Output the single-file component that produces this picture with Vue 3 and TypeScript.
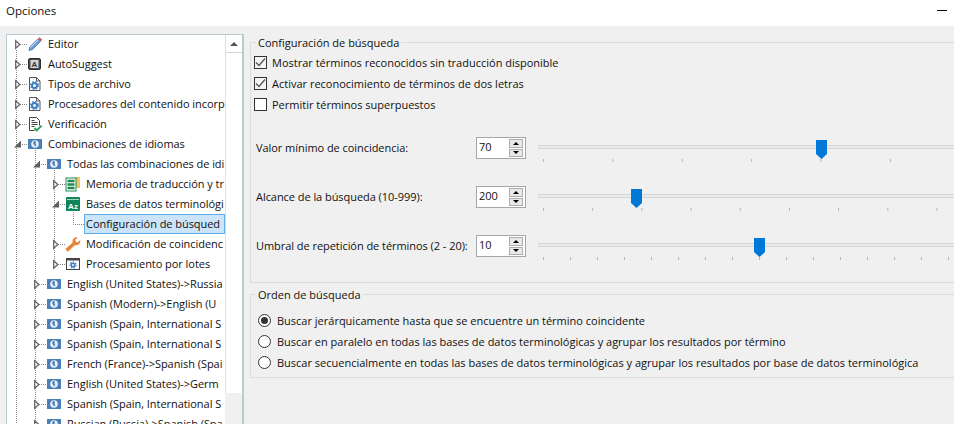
<script setup lang="ts">
type Icon = 'pencil' | 'suggest' | 'gear' | 'check' | 'globe' | 'memory' | 'termbase' | 'none' | 'wrench' | 'batch'

interface TreeRow {
  label: string
  level: number
  state: 'closed' | 'open' | 'leaf'
  icon: Icon
  selected?: boolean
}

const rows: TreeRow[] = [
  { label: 'Editor', level: 0, state: 'closed', icon: 'pencil' },
  { label: 'AutoSuggest', level: 0, state: 'closed', icon: 'suggest' },
  { label: 'Tipos de archivo', level: 0, state: 'closed', icon: 'gear' },
  { label: 'Procesadores del contenido incorp', level: 0, state: 'closed', icon: 'gear' },
  { label: 'Verificación', level: 0, state: 'closed', icon: 'check' },
  { label: 'Combinaciones de idiomas', level: 0, state: 'open', icon: 'globe' },
  { label: 'Todas las combinaciones de idi', level: 1, state: 'open', icon: 'globe' },
  { label: 'Memoria de traducción y tr', level: 2, state: 'closed', icon: 'memory' },
  { label: 'Bases de datos terminológi', level: 2, state: 'open', icon: 'termbase' },
  { label: 'Configuración de búsqued', level: 3, state: 'leaf', icon: 'none', selected: true },
  { label: 'Modificación de coincidenc', level: 2, state: 'closed', icon: 'wrench' },
  { label: 'Procesamiento por lotes', level: 2, state: 'closed', icon: 'batch' },
  { label: 'English (United States)->Russia', level: 1, state: 'closed', icon: 'globe' },
  { label: 'Spanish (Modern)->English (U', level: 1, state: 'closed', icon: 'globe' },
  { label: 'Spanish (Spain, International S', level: 1, state: 'closed', icon: 'globe' },
  { label: 'Spanish (Spain, International S', level: 1, state: 'closed', icon: 'globe' },
  { label: 'French (France)->Spanish (Spai', level: 1, state: 'closed', icon: 'globe' },
  { label: 'English (United States)->Germ', level: 1, state: 'closed', icon: 'globe' },
  { label: 'Spanish (Spain, International S', level: 1, state: 'closed', icon: 'globe' },
  { label: 'Russian (Russia)->Spanish (Spa', level: 1, state: 'closed', icon: 'globe' },
]

// dotted connector lines of the tree, drawn under the rows
const guidePath =
  'M9.5 15V390M28.5 115V390M47.5 135V229.5M66.5 175V189.5H77' +
  rows
    .map((row, i) => (row.level < 3 ? `M${13 + row.level * 19} ${9.5 + i * 20}h8` : ''))
    .join('')

const checks = [
  { label: 'Mostrar términos reconocidos sin traducción disponible', on: true },
  { label: 'Activar reconocimiento de términos de dos letras', on: true },
  { label: 'Permitir términos superpuestos', on: false },
]

const sliders = [
  { label: 'Valor mínimo de coincidencia:', value: '70', thumb: 278, step: 69.4 },
  { label: 'Alcance de la búsqueda (10-999):', value: '200', thumb: 93, step: 49.2 },
  { label: 'Umbral de repetición de términos (2 - 20):', value: '10', thumb: 216, step: 27 },
]

const radios = [
  { label: 'Buscar jerárquicamente hasta que se encuentre un término coincidente', on: true },
  { label: 'Buscar en paralelo en todas las bases de datos terminológicas y agrupar los resultados por término', on: false },
  { label: 'Buscar secuencialmente en todas las bases de datos terminológicas y agrupar los resultados por base de datos terminológica', on: false },
]
</script>

<template>
  <div class="window">
    <header class="titlebar">
      <span>Opciones</span>
      <i class="minimize" />
    </header>
    <main class="content">
      <aside class="tree-panel">
        <div class="tree">
          <svg class="guides" width="218" height="390">
            <path :d="guidePath" fill="none" stroke="#8a8a8a" stroke-dasharray="1 1" />
          </svg>
          <div class="rows">
            <div
              v-for="(row, i) in rows"
              :key="i"
              :class="['tree-row', `level-${row.level}`]"
            >
              <svg v-if="row.state !== 'leaf'" class="expander" width="6" height="9" viewBox="0 0 6 9">
                <path v-if="row.state === 'closed'" d="M.7.8L4.8 4.5.7 8.2z" fill="#fff" stroke="#666" stroke-width="1.3" />
                <path v-else d="M6 .5V7.5H-1z" fill="#5f5f5f" />
              </svg>
              <svg v-if="row.icon !== 'none'" class="tree-icon" width="16" height="16" viewBox="0 0 16 16">
                <template v-if="row.icon === 'pencil'">
                  <path d="M2 14.5l.8-3.6L10.8 3l2.6 2.6-7.9 8z" fill="#6f9bd1" stroke="#3f74b5" stroke-width=".8" />
                  <path d="M3.5 11.5l7.5-7.5" stroke="#dbe7f5" />
                  <path d="M11 2.8l1.6-1.6 2.6 2.6-1.6 1.6z" fill="#d9534f" />
                </template>
                <template v-else-if="row.icon === 'suggest'">
                  <rect x="1.5" y="2.5" width="12" height="11" rx="1.5" fill="#4a4a4a" stroke="#2f2f2f" />
                  <rect x="3.5" y="4" width="8" height="8" fill="#d6d6d6" />
                  <text x="7.5" y="11" text-anchor="middle" class="icon-text" fill="#333">A</text>
                </template>
                <template v-else-if="row.icon === 'gear'">
                  <path d="M2.5 1.5h7l3.5 3.5v9.5H2.5z" fill="#fff" stroke="#555" />
                  <path d="M9.5 1.5v3.5H13" fill="none" stroke="#555" />
                  <circle cx="7.5" cy="9.5" r="2.5" fill="none" stroke="#3f7fc1" stroke-width="2" />
                  <circle cx="7.5" cy="9.5" r="3.9" fill="none" stroke="#3f7fc1" stroke-width="1.3" stroke-dasharray="1.5 1.6" />
                </template>
                <template v-else-if="row.icon === 'check'">
                  <path d="M7.5 14.5H2.5v-13h7l3 3v5" fill="#fff" stroke="#444" />
                  <path d="M4.5 6.5h6M4.5 8.5h6M4.5 10.5h3M4.5 4.5h3" stroke="#444" />
                  <path d="M7.5 12l2.2 2.4 5-4.8" fill="none" stroke="#2e9e5b" stroke-width="2" />
                </template>
                <template v-else-if="row.icon === 'globe'">
                  <rect x="1" y="3" width="14" height="10" fill="#4b7fb8" />
                  <circle cx="8" cy="8" r="3.8" fill="#e8f0f8" />
                  <path d="M7 5l2 .6-.5 2 .8 1.6-1.3 1.4-1-2.2-1-1.2z" fill="#4b7fb8" />
                </template>
                <template v-else-if="row.icon === 'memory'">
                  <rect x="10" y="1" width="5" height="11" fill="#edc766" />
                  <rect x="1" y="2" width="10" height="13" fill="#fff" stroke="#1d8a50" />
                  <path d="M2.5 5h7M2.5 8.5h7M2.5 12h7" stroke="#1d8a50" stroke-width="2.4" />
                </template>
                <template v-else-if="row.icon === 'termbase'">
                  <rect x="1" y="1" width="14" height="14" rx="1" fill="#11855a" />
                  <rect x="2" y="3" width="12" height="1" fill="#a5d6bd" />
                  <text x="8" y="12.5" text-anchor="middle" class="icon-text" fill="#fff">Az</text>
                </template>
                <template v-else-if="row.icon === 'wrench'">
                  <path d="M1.5 14.5a1.5 1.5 0 0 1 0-2.4l6.2-5.6a4 4 0 0 1 5-5l-2.4 2.3.5 2 2 .6 2.3-2.3a4 4 0 0 1-5 5l-6.2 5.7a1.5 1.5 0 0 1-2.4-.3z" fill="#e8833a" />
                </template>
                <template v-else-if="row.icon === 'batch'">
                  <rect x="1.5" y="2.5" width="13" height="11" fill="#fff" stroke="#444" />
                  <rect x="1.5" y="2.5" width="13" height="2" fill="#444" />
                  <circle cx="8" cy="9" r="1.8" fill="none" stroke="#3f7fc1" stroke-width="1.6" />
                  <circle cx="8" cy="9" r="3.1" fill="none" stroke="#3f7fc1" stroke-width="1.1" stroke-dasharray="1.4 1.4" />
                </template>
              </svg>
              <span :class="['tree-label', { selected: row.selected }]">{{ row.label }}</span>
            </div>
          </div>
        </div>
        <div class="scrollbar">
          <div class="scroll-up"><i /></div>
        </div>
      </aside>

      <section class="settings">
        <fieldset class="group search-group">
          <legend>Configuración de búsqueda</legend>
          <div class="checks">
            <label v-for="c in checks" :key="c.label" class="check">
              <span :class="['box', { on: c.on }]">
                <svg v-if="c.on" width="11" height="11" viewBox="0 0 11 11"><path d="M1 5.5l3 3 6-7" fill="none" stroke="#555" stroke-width="1.3" /></svg>
              </span>
              {{ c.label }}
            </label>
          </div>
          <div class="sliders">
            <div v-for="s in sliders" :key="s.label" class="slider-row">
              <span class="slider-label">{{ s.label }}</span>
              <div class="spin">
                <span class="spin-value">{{ s.value }}</span>
                <span class="spin-buttons">
                  <b><i class="up" /></b>
                  <b><i class="down" /></b>
                </span>
              </div>
              <div class="slider">
                <div class="track" />
                <div class="thumb" :style="{ left: s.thumb + 'px' }">
                  <svg width="11" height="19" viewBox="0 0 11 19"><path d="M0 0h11v14l-5.5 5L0 14z" fill="#0078d7" /></svg>
                </div>
                <div class="ticks" :style="{ backgroundSize: s.step + 'px 3px' }" />
              </div>
            </div>
          </div>
        </fieldset>

        <fieldset class="group order-group">
          <legend>Orden de búsqueda</legend>
          <label v-for="r in radios" :key="r.label" class="radio">
            <span :class="['dot', { on: r.on }]" />
            {{ r.label }}
          </label>
        </fieldset>
      </section>
    </main>
  </div>
</template>

<style>
html, body {
  margin: 0;
  overflow: hidden;
}
</style>

<style scoped>
.window {
  width: 954px;
  height: 424px;
  display: flex;
  flex-direction: column;
  overflow: hidden;
  background: #f0f0f0;
  color: #111;
  font-family: 'Open Sans', 'Noto Sans', sans-serif;
  font-size: 11px;
}
.titlebar {
  flex: 0 0 26px;
  box-sizing: border-box;
  display: flex;
  justify-content: space-between;
  align-items: center;
  padding: 0 7px 5px 6px;
  background: #fff;
  font-size: 11.5px;
}
.minimize {
  width: 10px;
  height: 1px;
  background: #000;
}
.content {
  flex: 1;
  display: flex;
  min-height: 0;
  padding-top: 8px;
}
.tree-panel {
  flex: 0 0 237px;
  margin-left: 6px;
  display: flex;
  align-items: flex-start;
  height: 396px;
  border: solid #b9cbd1;
  border-width: 1px 2px 0 1px;
  box-sizing: border-box;
}
.tree {
  position: relative;
  flex: 0 0 218px;
  height: 390px;
  overflow: hidden;
  background: #fff;
  letter-spacing: -0.05px;
}
.guides {
  position: absolute;
  left: 0;
  top: 0;
}
.rows {
  position: relative;
  margin-top: -1px;
}
.tree-row {
  height: 20px;
  display: flex;
  align-items: center;
  white-space: nowrap;
}
.level-0 { padding-left: 8px; }
.level-1 { padding-left: 27px; }
.level-2 { padding-left: 46px; }
.level-3 { padding-left: 77px; }
.expander {
  flex: none;
  margin-right: 6px;
  overflow: visible;
}
.tree-icon {
  flex: none;
  margin-right: 4px;
}
.icon-text {
  font-family: 'Liberation Sans', sans-serif;
  font-size: 8px;
  font-weight: 700;
  letter-spacing: 0;
}
.tree-label {
  padding: 0 1px 2px;
}
.tree-label.selected {
  display: flex;
  align-items: center;
  width: 141px;
  height: 20px;
  box-sizing: border-box;
  background: #cce4f7;
  border: 1px solid #62acea;
}
.scrollbar {
  flex: 0 0 16px;
  height: 358px;
  background: #fff;
  border-left: 1px solid #e0e0e0;
}
.scroll-up {
  height: 17px;
  display: flex;
  align-items: center;
  justify-content: center;
  border-bottom: 1px solid #d5d5d5;
}
.scroll-up i {
  border-left: 4px solid transparent;
  border-right: 4px solid transparent;
  border-bottom: 4px solid #555;
}
.settings {
  flex: 1;
  min-width: 0;
  padding: 1px 0 0 6px;
}
.group {
  margin: 0 -3px 0 0;
  padding: 0;
  border: solid #dcdcdc;
  border-width: 1px 0 1px 1px;
  min-width: 0;
}
.group legend {
  margin-left: 5px;
  padding: 0 2px;
  line-height: 15px;
}
.search-group {
  height: 248px;
  box-sizing: border-box;
}
.order-group {
  height: 91px;
  box-sizing: border-box;
  margin-top: 4px;
  padding-top: 8px;
}
.checks {
  display: flex;
  flex-direction: column;
  gap: 5px;
  padding: 4px 0 0 3px;
}
.check {
  display: flex;
  align-items: center;
  gap: 5px;
  height: 16px;
  white-space: nowrap;
}
.box {
  width: 11px;
  height: 11px;
  display: flex;
  border: 1px solid #333;
  background: #fff;
}
.box.on {
  background: #f4f4f4;
}
.sliders {
  display: flex;
  flex-direction: column;
  gap: 27px;
  margin-top: 25px;
}
.slider-row {
  display: flex;
  align-items: flex-start;
  height: 22px;
}
.slider-label {
  flex: 0 0 225px;
  padding-left: 5px;
  line-height: 21px;
  box-sizing: border-box;
  white-space: nowrap;
  letter-spacing: -0.05px;
}
.spin {
  flex: 0 0 50px;
  height: 22px;
  display: flex;
  justify-content: space-between;
  box-sizing: border-box;
  border: 1px solid #a6a6a6;
  background: #fff;
  padding: 1px;
}
.spin-value {
  padding-left: 1px;
  line-height: 15px;
}
.spin-buttons {
  display: flex;
  flex-direction: column;
  gap: 1px;
  width: 14px;
  margin-right: 1px;
}
.spin-buttons b {
  flex: 1;
  display: flex;
  align-items: center;
  justify-content: center;
  background: #e8e8e8;
  border: 1px solid #adadad;
}
.up, .down {
  border-left: 3px solid transparent;
  border-right: 3px solid transparent;
}
.up { border-bottom: 3px solid #000; }
.down { border-top: 3px solid #000; }
.slider {
  position: relative;
  flex: 1;
  margin-left: 12px;
  height: 26px;
}
.track {
  height: 2px;
  margin-top: 8px;
  background: #ececec;
  border: solid #d2d7d3;
  border-width: 1px 0;
}
.thumb {
  position: absolute;
  top: 3px;
  line-height: 0;
}
.ticks {
  height: 3px;
  margin-top: 10px;
  margin-left: 5px;
  background-image: linear-gradient(to right, #b5b5b5 1px, transparent 1px);
  background-repeat: repeat-x;
}
.radio {
  display: flex;
  align-items: center;
  gap: 6px;
  height: 21px;
  padding-left: 7px;
  white-space: nowrap;
}
.dot {
  position: relative;
  width: 11px;
  height: 11px;
  border: 1px solid #333;
  border-radius: 50%;
  background: #fff;
}
.dot.on::after {
  content: '';
  position: absolute;
  inset: 2px;
  border-radius: 50%;
  background: #333;
}
</style>
